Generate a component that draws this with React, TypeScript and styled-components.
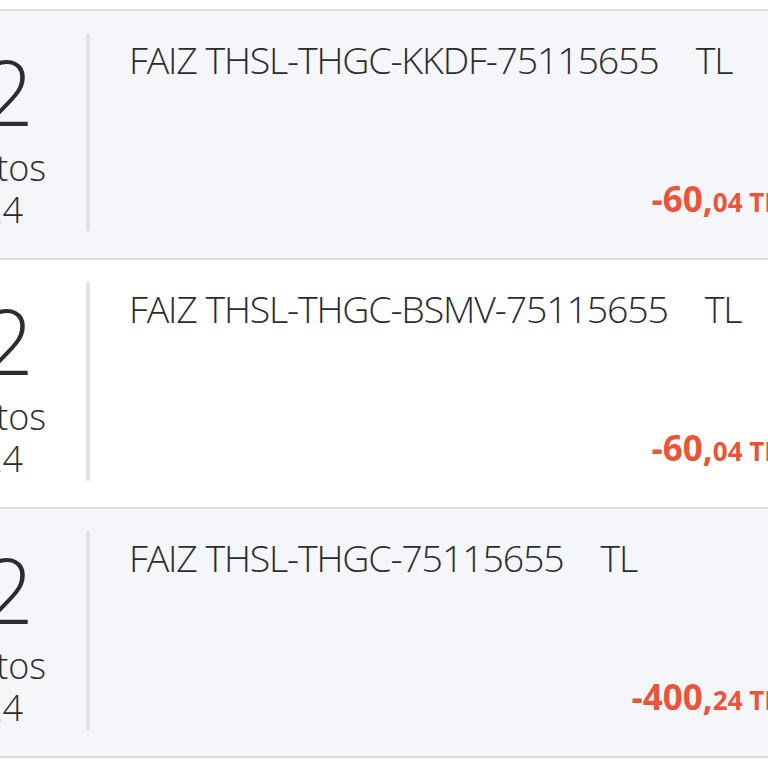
import React from "react";
import styled, { createGlobalStyle } from "styled-components";

const Global = createGlobalStyle`
  html, body {
    margin: 0;
    padding: 0;
    background: #ffffff;
    overflow: hidden;
  }
  body {
    font-family: "Open Sans", "Noto Sans", "DejaVu Sans", sans-serif;
    font-stretch: 97%;
  }
`;

const List = styled.div`
  width: 880px;
  margin-left: -88px;
  display: flex;
  flex-direction: column;
  background: #ffffff;
`;

const Spacer = styled.div`
  height: 9px;
  background: #ffffff;
  border-bottom: 2px solid #dcdde1;
`;

const Row = styled.div<{ $alt: boolean }>`
  display: flex;
  height: 247px;
  background: ${(p) => (p.$alt ? "#ffffff" : "#f5f6fa")};
  border-bottom: 2px solid #dcdde1;
`;

const DateCol = styled.div`
  width: 140px;
  flex: none;
  display: flex;
  flex-direction: column;
  align-items: center;
  padding-top: 35px;
  color: #2c2c30;
  font-weight: 300;
  white-space: nowrap;
`;

const Day = styled.div`
  font-size: 91px;
  line-height: 1;
`;

const Month = styled.div`
  font-size: 36px;
  line-height: 1.2;
  margin-top: 9px;
`;

const Year = styled.div`
  font-size: 36px;
  line-height: 1.2;
  margin-top: -1px;
`;

const Divider = styled.div`
  width: 4px;
  flex: none;
  margin: 22px 0 26px 34px;
  border-radius: 2px;
  background: #e0e1e9;
`;

const Content = styled.div`
  flex: 1;
  display: flex;
  flex-direction: column;
  justify-content: space-between;
  padding: 26px 13px 38px 39px;
  min-width: 0;
`;

const Title = styled.div`
  font-size: 37.5px;
  letter-spacing: -1.15px;
  line-height: 1.2;
  font-weight: 300;
  color: #2b2b30;
  white-space: nowrap;
`;

const Currency = styled.span`
  margin-left: 37px;
`;

const Amount = styled.div`
  align-self: flex-end;
  color: #e9553a;
  font-weight: 700;
  font-size: 35px;
  line-height: 1.2;
  white-space: nowrap;
`;

const Cents = styled.span`
  font-size: 26px;
`;

const items = [
  { title: "FAIZ THSL-THGC-KKDF-75115655", whole: "-60,", cents: "04" },
  { title: "FAIZ THSL-THGC-BSMV-75115655", whole: "-60,", cents: "04" },
  { title: "FAIZ THSL-THGC-75115655", whole: "-400,", cents: "24" },
];

export default function App() {
  return (
    <>
      <Global />
      <List>
        <Spacer />
        {items.map((it, i) => (
          <Row key={i} $alt={i % 2 === 1}>
            <DateCol>
              <Day>12</Day>
              <Month>Ağustos</Month>
              <Year>2024</Year>
            </DateCol>
            <Divider />
            <Content>
              <Title>
                {it.title}
                <Currency>TL</Currency>
              </Title>
              <Amount>
                {it.whole}
                <Cents>{it.cents} TL</Cents>
              </Amount>
            </Content>
          </Row>
        ))}
      </List>
    </>
  );
}
